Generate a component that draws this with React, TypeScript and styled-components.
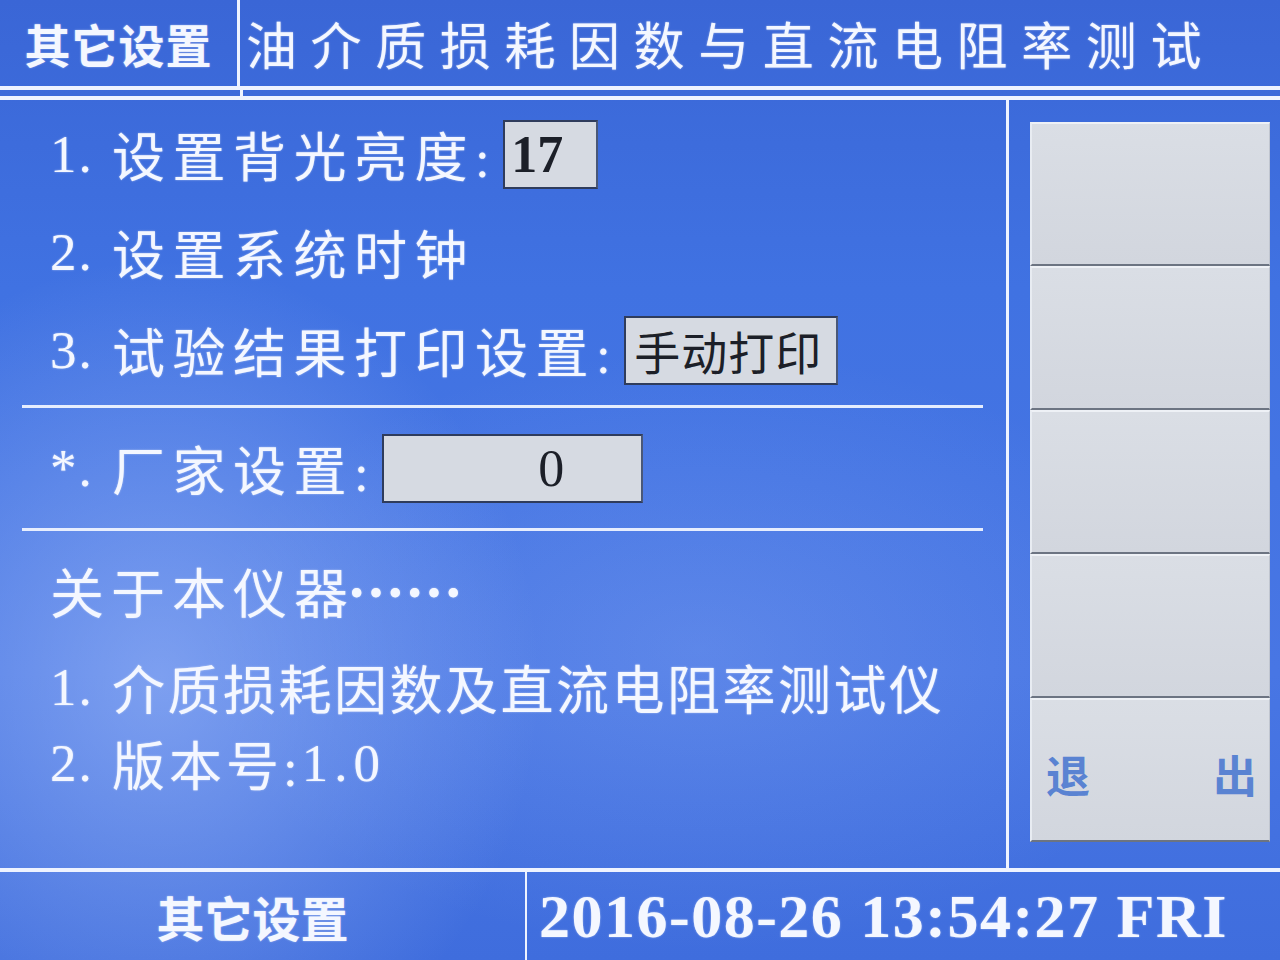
import React from "react";
import styled, { createGlobalStyle } from "styled-components";

const GlobalStyle = createGlobalStyle`
    html, body {
        margin: 0;
        padding: 0;
        background: #3d6de0;
    }
    * {
        box-sizing: border-box;
    }
`;

const cjk = `"Noto Sans CJK SC", "Noto Sans", sans-serif`;
const mixed = `"Liberation Serif", "Noto Sans CJK SC", serif`;
const line = "#eef3ff";

const Screen = styled.div`
    width: 1280px;
    height: 960px;
    overflow: hidden;
    display: flex;
    flex-direction: column;
    color: #f4f7ff;
    background:
        radial-gradient(ellipse 380px 420px at 160px 680px, rgba(190, 210, 255, 0.45), rgba(190, 210, 255, 0) 100%),
        radial-gradient(ellipse 500px 300px at 700px 650px, rgba(170, 195, 250, 0.22), rgba(170, 195, 250, 0) 100%),
        linear-gradient(180deg, #3a66d6 0%, #4072e2 30%, #4876e4 70%, #3f6ddd 100%);
`;

const Header = styled.div`
    height: 86px;
    display: flex;
    align-items: stretch;
`;

const HeaderTag = styled.div`
    width: 240px;
    border-right: 3px solid ${line};
    display: flex;
    align-items: center;
    justify-content: center;
    font-family: ${cjk};
    font-weight: 700;
    font-size: 46px;
    letter-spacing: 1px;
    text-shadow: 0 0 2px rgba(255, 255, 255, 0.5);
`;

const HeaderTitle = styled.div`
    flex: 1;
    display: flex;
    align-items: center;
    padding-left: 6px;
    font-family: ${cjk};
    font-weight: 400;
    font-size: 51px;
    letter-spacing: 13.6px;
    white-space: nowrap;
    text-shadow: 0 0 2px rgba(255, 255, 255, 0.55);
`;

const DoubleRule = styled.div`
    height: 14px;
    border-top: 4px solid ${line};
    border-bottom: 4px solid ${line};
    position: relative;

    &::before {
        content: "";
        position: absolute;
        left: 240px;
        top: -4px;
        width: 3px;
        height: 14px;
        background: ${line};
    }
`;

const Main = styled.div`
    height: 768px;
    display: flex;
`;

const Content = styled.div`
    width: 1009px;
    border-right: 3px solid ${line};
    padding: 5px 20px 0 22px;
    display: flex;
    flex-direction: column;
`;

const Row = styled.div<{ $h: number; $ls?: number }>`
    height: ${(p) => p.$h}px;
    display: flex;
    align-items: center;
    padding-left: 28px;
    font-family: ${mixed};
    font-size: 53px;
    letter-spacing: ${(p) => p.$ls ?? 7.5}px;
    white-space: nowrap;
    text-shadow: 0 0 2px rgba(255, 255, 255, 0.55);
`;

const Num = styled.span`
    display: inline-block;
    width: 62px;
    letter-spacing: 2px;
`;

const Version = styled.span`
    letter-spacing: 6px;
`;

const ValueBox = styled.div<{ $w: number; $pl?: number }>`
    width: ${(p) => p.$w}px;
    height: 69px;
    margin-left: 6px;
    padding-left: ${(p) => p.$pl ?? 6}px;
    display: flex;
    align-items: center;
    background: #d6dae2;
    border: 2px solid #2f3c5c;
    border-right-color: #4a5878;
    color: #1c1f28;
    text-shadow: none;
    letter-spacing: 0;
`;

const BoxNumber = styled.span<{ $bold?: boolean }>`
    font-family: "Liberation Serif", serif;
    font-weight: ${(p) => (p.$bold ? 700 : 400)};
    font-size: 52px;
`;

const BoxText = styled.span`
    font-family: ${cjk};
    font-size: 46px;
    letter-spacing: 1px;
`;

const Rule = styled.div<{ $mt: number }>`
    height: 3px;
    margin-top: ${(p) => p.$mt}px;
    width: 961px;
    background: ${line};
    opacity: 0.95;
`;

const AboutTitle = styled(Row)`
    font-family: ${cjk};
    font-size: 54px;
    letter-spacing: 7px;
`;

const Dots = styled.span`
    font-family: ${cjk};
    font-weight: 700;
    font-size: 58px;
    letter-spacing: 0;
    margin-left: -8px;
`;

const SideColumn = styled.div`
    flex: 1;
    padding: 22px 10px 0 21px;
    display: flex;
    flex-direction: column;
`;

const SoftKey = styled.div`
    height: 144px;
    background: linear-gradient(180deg, #dadee5 0%, #d2d6de 100%);
    border-top: 2px solid #eef1f6;
    border-left: 2px solid #e8ecf2;
    border-bottom: 2px solid #6c7482;
    border-right: 1px solid #c0c5cf;
    display: flex;
    align-items: center;
    justify-content: space-between;
    padding: 8px 12px 0 14px;
    font-family: ${cjk};
    font-weight: 700;
    font-size: 44px;
    color: #5a83d2;
`;

const BottomRule = styled.div`
    height: 4px;
    background: ${line};
`;

const Footer = styled.div`
    flex: 1;
    display: flex;
`;

const FooterTag = styled.div`
    width: 527px;
    border-right: 2px solid ${line};
    display: flex;
    align-items: center;
    justify-content: center;
    padding-right: 20px;
    font-family: ${cjk};
    font-weight: 700;
    font-size: 48px;
    text-shadow: 0 0 2px rgba(255, 255, 255, 0.5);
`;

const Clock = styled.div`
    flex: 1;
    display: flex;
    align-items: center;
    padding-left: 12px;
    font-family: "Liberation Serif", serif;
    font-weight: 700;
    font-size: 62px;
    letter-spacing: 1.5px;
    white-space: pre;
    text-shadow: 0 0 2px rgba(255, 255, 255, 0.5);
`;

const App = () => {
    return (
        <>
            <GlobalStyle />
            <Screen>
                <Header>
                    <HeaderTag>其它设置</HeaderTag>
                    <HeaderTitle>油介质损耗因数与直流电阻率测试</HeaderTitle>
                </Header>
                <DoubleRule />
                <Main>
                    <Content>
                        <Row $h={98}>
                            <Num>1.</Num>设置背光亮度:
                            <ValueBox $w={95}>
                                <BoxNumber $bold>17</BoxNumber>
                            </ValueBox>
                        </Row>
                        <Row $h={98}>
                            <Num>2.</Num>设置系统时钟
                        </Row>
                        <Row $h={98}>
                            <Num>3.</Num>试验结果打印设置:
                            <ValueBox $w={214} $pl={8}>
                                <BoxText>手动打印</BoxText>
                            </ValueBox>
                        </Row>
                        <Rule $mt={6} />
                        <Row $h={120}>
                            <Num>*.</Num>厂家设置:
                            <ValueBox $w={261} $pl={154}>
                                <BoxNumber>0</BoxNumber>
                            </ValueBox>
                        </Row>
                        <Rule $mt={0} />
                        <AboutTitle $h={118}>
                            关于本仪器<Dots>……</Dots>
                        </AboutTitle>
                        <Row $h={76} $ls={2.5}>
                            <Num>1.</Num>介质损耗因数及直流电阻率测试仪
                        </Row>
                        <Row $h={76} $ls={4}>
                            <Num>2.</Num>版本号:<Version>1.0</Version>
                        </Row>
                    </Content>
                    <SideColumn>
                        <SoftKey />
                        <SoftKey />
                        <SoftKey />
                        <SoftKey />
                        <SoftKey>
                            <span>退</span>
                            <span>出</span>
                        </SoftKey>
                    </SideColumn>
                </Main>
                <BottomRule />
                <Footer>
                    <FooterTag>其它设置</FooterTag>
                    <Clock>2016-08-26 13:54:27 FRI</Clock>
                </Footer>
            </Screen>
        </>
    );
};

export default App;
